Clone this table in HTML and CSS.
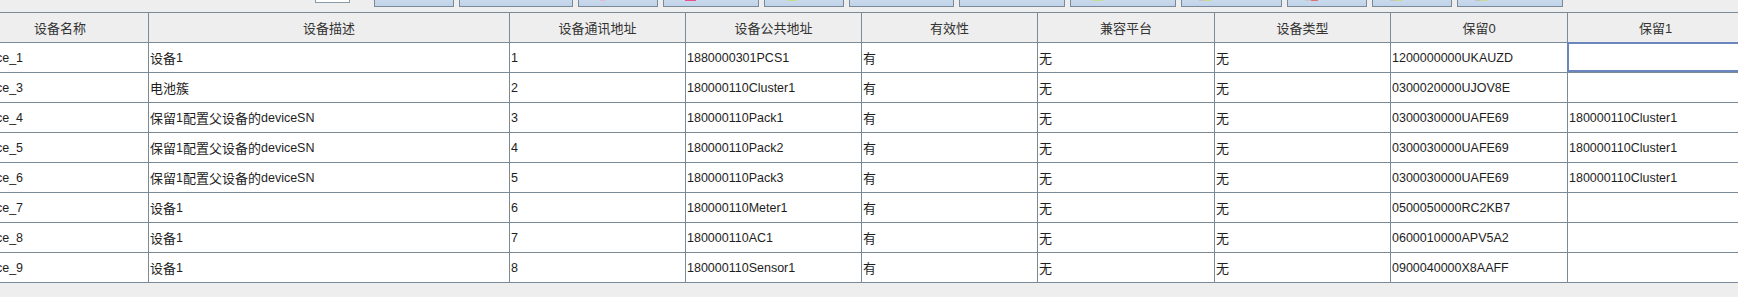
FILE: index.html
```html
<!DOCTYPE html>
<html lang="zh-CN">
<head>
<meta charset="utf-8">
<title>设备列表</title>
<link rel="stylesheet" href="styles.css">
</head>
<body>
<div class="toolbar">
  <span class="tb-label">设备类型：</span>
  <span class="tb-field"></span>
  <button class="btn w80 ip20"><span class="ico"></span><span class="btxt">查询</span></button>
  <button class="btn w114 ip20"><span class="ico"></span><span class="btxt">刷新列表</span></button>
  <button class="btn w80 ip22"><span class="ico ic-pinklite"></span><span class="btxt">添加</span></button>
  <button class="btn w96 ip22"><span class="ico ic-pink"></span><span class="btxt">删除</span></button>
  <button class="btn w80 ip23"><span class="ico ic-green"></span><span class="btxt">保存</span></button>
  <button class="btn w105 ip20"><span class="ico"></span><span class="btxt">导入</span></button>
  <button class="btn w106 ip20"><span class="ico"></span><span class="btxt">导出</span></button>
  <button class="btn w106 ip23"><span class="ico ic-green"></span><span class="btxt">上移</span></button>
  <button class="btn w101 ip18"><span class="ico ic-graygreen"></span><span class="btxt">下移</span></button>
  <button class="btn w80 ip18"><span class="ico ic-grayred"></span><span class="btxt">清空</span></button>
  <button class="btn w80 ip18"><span class="ico ic-graygreen"></span><span class="btxt">复制</span></button>
  <button class="btn w106 ip18"><span class="ico ic-graygreen"></span><span class="btxt">粘贴</span></button>
</div>
<div class="table-wrap">
  <div class="grid">
    <div class="hc">设备名称</div>
    <div class="hc">设备描述</div>
    <div class="hc">设备通讯地址</div>
    <div class="hc">设备公共地址</div>
    <div class="hc">有效性</div>
    <div class="hc">兼容平台</div>
    <div class="hc">设备类型</div>
    <div class="hc">保留0</div>
    <div class="hc">保留1</div>

    <div class="c">device_1</div><div class="c"><span class="zh">设备</span>1</div><div class="c">1</div><div class="c">1880000301PCS1</div><div class="c"><span class="zh">有</span></div><div class="c"><span class="zh">无</span></div><div class="c"><span class="zh">无</span></div><div class="c">1200000000UKAUZD</div><div class="c sel"></div>
    <div class="c">device_3</div><div class="c"><span class="zh">电池簇</span></div><div class="c">2</div><div class="c">180000110Cluster1</div><div class="c"><span class="zh">有</span></div><div class="c"><span class="zh">无</span></div><div class="c"><span class="zh">无</span></div><div class="c">0300020000UJOV8E</div><div class="c"></div>
    <div class="c">device_4</div><div class="c"><span class="zh">保留</span>1<span class="zh">配置父设备的</span>deviceSN</div><div class="c">3</div><div class="c">180000110Pack1</div><div class="c"><span class="zh">有</span></div><div class="c"><span class="zh">无</span></div><div class="c"><span class="zh">无</span></div><div class="c">0300030000UAFE69</div><div class="c">180000110Cluster1</div>
    <div class="c">device_5</div><div class="c"><span class="zh">保留</span>1<span class="zh">配置父设备的</span>deviceSN</div><div class="c">4</div><div class="c">180000110Pack2</div><div class="c"><span class="zh">有</span></div><div class="c"><span class="zh">无</span></div><div class="c"><span class="zh">无</span></div><div class="c">0300030000UAFE69</div><div class="c">180000110Cluster1</div>
    <div class="c">device_6</div><div class="c"><span class="zh">保留</span>1<span class="zh">配置父设备的</span>deviceSN</div><div class="c">5</div><div class="c">180000110Pack3</div><div class="c"><span class="zh">有</span></div><div class="c"><span class="zh">无</span></div><div class="c"><span class="zh">无</span></div><div class="c">0300030000UAFE69</div><div class="c">180000110Cluster1</div>
    <div class="c">device_7</div><div class="c"><span class="zh">设备</span>1</div><div class="c">6</div><div class="c">180000110Meter1</div><div class="c"><span class="zh">有</span></div><div class="c"><span class="zh">无</span></div><div class="c"><span class="zh">无</span></div><div class="c">0500050000RC2KB7</div><div class="c"></div>
    <div class="c">device_8</div><div class="c"><span class="zh">设备</span>1</div><div class="c">7</div><div class="c">180000110AC1</div><div class="c"><span class="zh">有</span></div><div class="c"><span class="zh">无</span></div><div class="c"><span class="zh">无</span></div><div class="c">0600010000APV5A2</div><div class="c"></div>
    <div class="c">device_9</div><div class="c"><span class="zh">设备</span>1</div><div class="c">8</div><div class="c">180000110Sensor1</div><div class="c"><span class="zh">有</span></div><div class="c"><span class="zh">无</span></div><div class="c"><span class="zh">无</span></div><div class="c">0900040000X8AAFF</div><div class="c"></div>
  </div>
</div>
</body>
</html>
```
FILE: styles.css
```css
html, body {
  margin: 0;
  padding: 0;
  background: #eeeeee;
  overflow: hidden;
  width: 1738px;
  height: 297px;
  font-family: "Liberation Sans", "Noto Sans CJK SC", sans-serif;
  color: #222222;
}

.toolbar {
  height: 12px;
  overflow: hidden;
  display: flex;
  align-items: flex-end;
  padding-left: 158px;
}

.tb-label {
  font-size: 12px;
  line-height: 16px;
  color: #333333;
  margin-bottom: 9px;
  width: 80px;
}

.tb-field {
  display: block;
  width: 35px;
  height: 24px;
  box-sizing: border-box;
  background: #ffffff;
  border: 1px solid #8a99a6;
  margin-left: 77px;
  margin-bottom: 9px;
}

.btn {
  display: flex;
  align-items: flex-end;
  height: 26px;
  box-sizing: border-box;
  margin: 0 0 5px 5px;
  padding: 0 0 5px 0;
  border: 1px solid #7a8a99;
  background: linear-gradient(#e4edf7, #c0d3e9);
  font-family: "Noto Sans CJK SC", sans-serif;
  font-size: 12px;
  color: #333333;
}

.toolbar .btn:first-of-type { margin-left: 24px; }

.w80 { width: 80px; }
.w96 { width: 96px; }
.w101 { width: 101px; }
.w105 { width: 105px; }
.w106 { width: 106px; }
.w114 { width: 114px; }

.ip18 { padding-left: 17px; }
.ip20 { padding-left: 19px; }
.ip22 { padding-left: 21px; }
.ip23 { padding-left: 22px; }

.ico {
  display: block;
  width: 11px;
  height: 16px;
  flex: none;
}
.ic-pink { background: linear-gradient(transparent 80%, #f0508a 80%); }
.ic-pinklite { width: 5px; background: linear-gradient(transparent 80%, #e9b7cf 80%); }
.ic-green { width: 10px; background: linear-gradient(transparent 80%, #c6de8c 80%); }
.ic-graygreen { width: 12px; background: linear-gradient(90deg, #c4c4c4 0 45%, #c6de8c 45%); -webkit-mask: linear-gradient(transparent 85%, #000 85%); mask: linear-gradient(transparent 85%, #000 85%); }
.ic-grayred { width: 13px; background: linear-gradient(90deg, #c8c8c8 0 45%, #e07070 45%); -webkit-mask: linear-gradient(transparent 85%, #000 85%); mask: linear-gradient(transparent 85%, #000 85%); }

.btxt {
  margin-left: 4px;
  line-height: 16px;
}

.table-wrap {
  overflow: hidden;
}

.grid {
  display: grid;
  grid-template-columns: 176px 361px 176px 176px 176px 177px 176px 177px 176px;
  margin-left: -28px;
  width: max-content;
  border-top: 1px solid #7a8a99;
  background: #ffffff;
}

.hc, .c {
  height: 30px;
  box-sizing: border-box;
  border-bottom: 1px solid #7a8a99;
  border-left: 1px solid #7a8a99;
  display: flex;
  align-items: center;
  white-space: pre;
  overflow: hidden;
}

.hc:nth-child(9n+1), .c:nth-child(9n+1) {
  border-left: none;
}

.hc {
  background: #eeeeee;
  justify-content: center;
  font-size: 13px;
  color: #333333;
}

.c {
  background: #ffffff;
  padding-left: 1px;
  font-size: 12.5px;
  color: #1e1e1e;
}

.zh {
  font-size: 13px;
  vertical-align: 1px;
}

.c.sel {
  position: relative;
  overflow: visible;
}

.c.sel::after {
  content: "";
  position: absolute;
  top: -1px;
  left: -1px;
  right: 0;
  bottom: 0;
  border: 2px solid #6a86bd;
}
```
